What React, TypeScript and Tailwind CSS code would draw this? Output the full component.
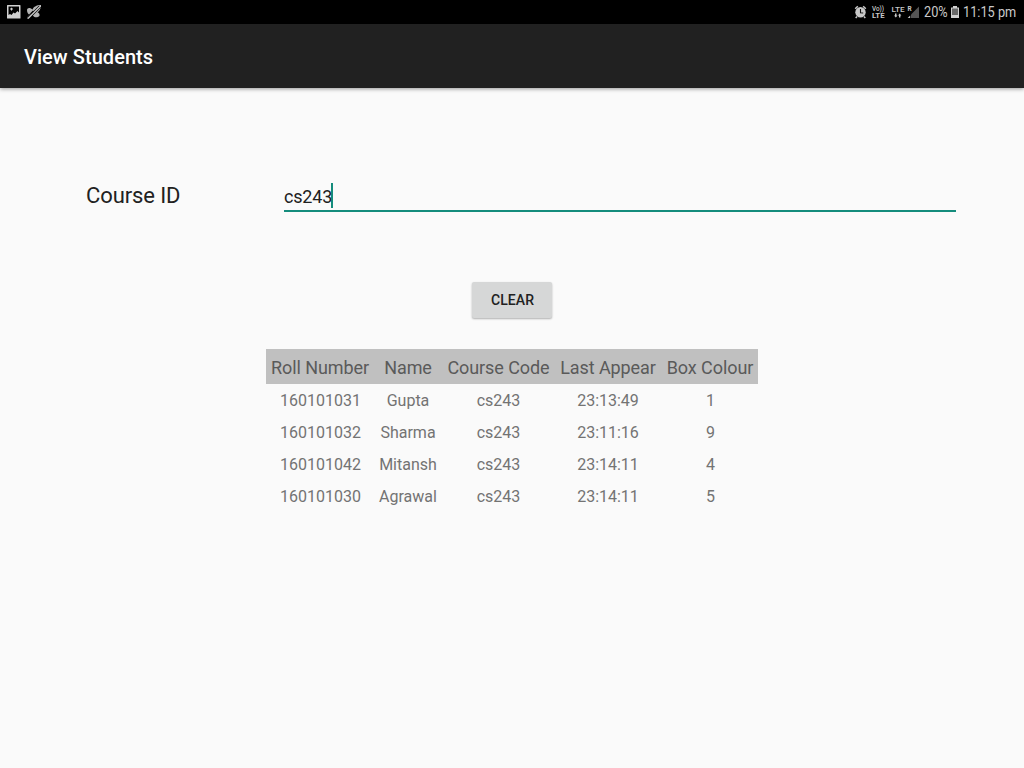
import React from "react";

const columns = ["Roll Number", "Name", "Course Code", "Last Appear", "Box Colour"];
const students = [
  ["160101031", "Gupta", "cs243", "23:13:49", "1"],
  ["160101032", "Sharma", "cs243", "23:11:16", "9"],
  ["160101042", "Mitansh", "cs243", "23:14:11", "4"],
  ["160101030", "Agrawal", "cs243", "23:14:11", "5"],
];

function PictureIcon() {
  return (
    <svg className="ml-[7px] h-6 w-[14px]" viewBox="7 0 14 24">
      <path
        fill="#cfcfcf"
        fillRule="evenodd"
        d="M7.500 5h12.500a.5.5 0 0 1 .5.5V18a.5.5 0 0 1-.5.5H7.500A.5.5 0 0 1 7 18V5.500a.5.5 0 0 1 .5-.5ZM8.500 6.500v8.500l1.500-1 1.500 1 2-2.500 1.500 1 2.500-2.500 1.500 1.500V6.500ZM10 8.500h1V7.700h1v.8h1v1h-1v1h-1v-1h-1Z"
      />
    </svg>
  );
}

function MutedIcon() {
  return (
    <svg className="ml-[5px] h-6 w-4" viewBox="26 0 16 24">
      <g fill="#b5b5b5">
        <path d="M27 10C27 8.300 29 7.500 30.500 8.300L33.500 10l-4.500 4.500C27.800 13.500 27 12 27 10Z" />
        <path d="M32.500 10C32.800 7 36.500 5 41 5c.2 4-2.200 7.200-5.500 8Z" />
        <path d="M32.500 14.500l3-3c2.500.3 4.500 2 4 4.300-1.500 2.200-6 2.200-7-1.300Z" />
        <path d="M27 17.500l4-4 1.500 1.500-3.500 3.500h-2Z" />
      </g>
      <path d="M40 6.500 28 18.500" stroke="#000" strokeWidth="2.500" />
      <path d="M40.500 6 28 18.500" stroke="#d0d0d0" strokeWidth="1.200" />
    </svg>
  );
}

function NetworkIcons() {
  return (
    <svg className="h-6 w-[70px]" viewBox="850 0 70 24" fill="#c8c8c8" fontFamily="Roboto, sans-serif">
      <circle cx="860.500" cy="12.200" r="5.200" />
      <path d="M855.200 8.700 857.800 6.300M863.200 6.300l2.600 2.400M857 16.500l-1.300 1.500M864 16.500l1.300 1.500" stroke="#c8c8c8" strokeWidth="1.500" />
      <path d="M860.500 9v3.700l2.700 .3" stroke="#111" strokeWidth="1.100" fill="none" />
      <text x="872" y="11.200" fontSize="6.500" fontWeight="500" textLength="12" lengthAdjust="spacingAndGlyphs">Vo))</text>
      <text x="872" y="18" fontSize="7" fontWeight="700" textLength="12.500" lengthAdjust="spacingAndGlyphs">LTE</text>
      <text x="891.500" y="12.200" fontSize="8" fontWeight="500" textLength="13" lengthAdjust="spacingAndGlyphs">LTE</text>
      <path d="M894 15.500h1V13.500h1.500v2h1l-1.700 2ZM898 15.500l1.700-2 1.700 2h-1v2h-1.400v-2Z" />
      <text x="907.500" y="11.200" fontSize="6.500" fontWeight="700">R</text>
      <path d="M919 6.500V18h-8V14.500Z" fill="#555" />
      <path d="M910.200 15.500V18h-2.500Z" />
    </svg>
  );
}

function BatteryIcon() {
  return (
    <svg className="ml-1 h-6 w-2" viewBox="951 0 8 24">
      <path d="M951 7.500h2V6h4v1.500h2V18h-8Z" fill="#d0d0d0" />
      <path d="M952 8.500h6v6.500h-6Z" fill="#696969" />
    </svg>
  );
}

function StatusBar() {
  return (
    <header className="flex h-6 items-center justify-between bg-black text-[#c9c9c9]">
      <div className="flex">
        <PictureIcon />
        <MutedIcon />
      </div>
      <div className="flex items-center pr-2 text-[15px] leading-6">
        <NetworkIcons />
        <span className="ml-1 w-[23px] whitespace-nowrap"><span className="inline-block origin-left scale-x-[.85]">20%</span></span>
        <BatteryIcon />
        <span className="ml-1 w-[53px] whitespace-nowrap"><span className="inline-block origin-left scale-x-[.85]">11:15 pm</span></span>
      </div>
    </header>
  );
}

export default function App() {
  return (
    <div className="flex h-screen flex-col overflow-hidden bg-[#fafafa] font-['Roboto',sans-serif]">
      <StatusBar />
      <div className="flex h-16 shrink-0 items-center bg-[#212121] px-6 shadow-[0_1px_4px_rgba(0,0,0,.4)]">
        <h1 className="pt-0.5 text-[20px] font-medium leading-6 tracking-[0.05px] text-white">View Students</h1>
      </div>
      <main className="flex flex-col items-center">
        <div className="mt-[92px] flex h-8 w-full">
          <label className="w-[284px] pl-[86px] text-[22px] leading-8 tracking-[-0.1px] text-[#212121]">Course ID</label>
          <div className="flex w-[672px] items-start border-b-2 border-[#148c7c] pt-[3px] text-[18px] text-[#212121]">
            <span className="w-[47px] whitespace-nowrap leading-[28px] tracking-[-0.2px]">cs243</span>
            <span className="h-[25px] w-0.5 bg-[#148c7c]" />
          </div>
        </div>
        <button className="mt-[70px] h-9 w-20 rounded-[2px] bg-[#d6d7d7] pl-px text-[14px] font-medium tracking-[0.1px] text-[#212121] shadow-[0_1px_2px_rgba(0,0,0,.3)]">CLEAR</button>
        <table className="mt-[31px] w-[492px] table-fixed border-collapse text-center text-[#737373]">
          <colgroup>
            <col className="w-[108px]" />
            <col className="w-[68px]" />
            <col className="w-[113px]" />
            <col className="w-[107px]" />
            <col className="w-[96px]" />
          </colgroup>
          <thead>
            <tr className="h-[35px] bg-[#c0c0c0] text-[18px] tracking-[-0.08px] text-[#5a5a5a]">
              {columns.map((name) => (
                <th key={name} className="whitespace-nowrap p-0 pt-[3px] font-normal leading-8 nth-4:pr-px">{name}</th>
              ))}
            </tr>
          </thead>
          <tbody>
            {students.map((row) => (
              <tr key={row[0]} className="h-8 text-[16px]">
                {row.map((value, i) => (
                  <td key={i} className="p-0 pt-[2px] leading-[30px] first:pl-px last:pl-px nth-4:pr-px">{value}</td>
                ))}
              </tr>
            ))}
          </tbody>
        </table>
      </main>
    </div>
  );
}
